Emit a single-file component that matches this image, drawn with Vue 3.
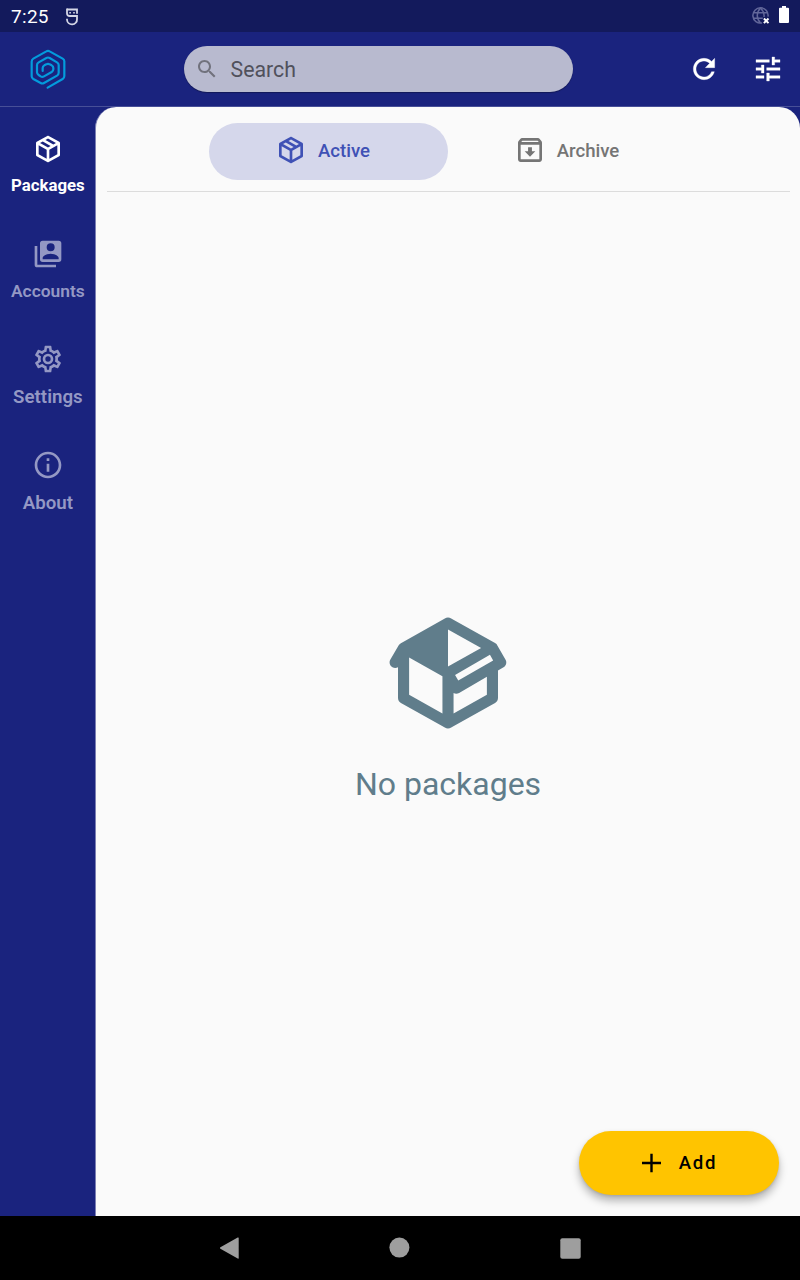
<script setup>
const box = 'M21,16.5C21,16.88 20.79,17.21 20.47,17.38L12.57,21.82C12.41,21.94 12.21,22 12,22C11.79,22 11.59,21.94 11.43,21.82L3.53,17.38C3.21,17.21 3,16.88 3,16.5V7.5C3,7.12 3.21,6.79 3.53,6.62L11.43,2.18C11.59,2.06 11.79,2 12,2C12.21,2 12.41,2.06 12.57,2.18L20.47,6.62C20.79,6.79 21,7.12 21,7.5V16.5M12,4.15L10.11,5.22L16,8.61L17.96,7.5L12,4.15M6.04,7.5L12,10.85L13.96,9.75L8.08,6.35L6.04,7.5M5,15.91L11,19.29V12.58L5,9.21V15.91M19,15.91V9.21L13,12.58V19.29L19,15.91Z'
const openBox = 'M2,10.96C1.5,10.68 1.35,10.07 1.63,9.59L3.13,7C3.24,6.8 3.41,6.66 3.6,6.58L11.43,2.18C11.59,2.06 11.79,2 12,2C12.21,2 12.41,2.06 12.57,2.18L20.47,6.62C20.66,6.72 20.82,6.88 20.91,7.08L22.36,9.6C22.64,10.08 22.47,10.69 22,10.96L21,11.54V16.5C21,16.88 20.79,17.21 20.47,17.38L12.57,21.82C12.41,21.94 12.21,22 12,22C11.79,22 11.59,21.94 11.43,21.82L3.53,17.38C3.21,17.21 3,16.88 3,16.5V10.96C2.7,11.13 2.32,11.14 2,10.96M12,4.15V4.15L12,10.85V10.85L17.96,7.5L12,4.15M5,15.91L11,19.29V12.58L5,9.21V15.91M19,15.91V12.69L14,15.59C13.67,15.77 13.3,15.76 13,15.6V19.29L19,15.91M13.85,13.36L20.13,9.73L19.55,8.72L13.27,12.35L13.85,13.36Z'
const archive = 'M20.54 5.23l-1.39-1.68C18.88 3.21 18.47 3 18 3H6c-.47 0-.88.21-1.16.55L3.46 5.23C3.17 5.57 3 6.02 3 6.5V19c0 1.1.9 2 2 2h14c1.1 0 2-.9 2-2V6.5c0-.48-.17-.93-.46-1.27zM6.24 5h11.52l.83 1H5.42l.82-1zM5 19V8h14v11H5zM13.45 10h-2.9v3H8l4 4 4-4h-2.55z'
const menu = [
  { label: 'Packages', cls: 'packages', icon: box },
  { label: 'Accounts', cls: 'accounts', icon: 'M4,6H2V20A2,2 0 0,0 4,22H18V20H4V6M20,2A2,2 0 0,1 22,4V16A2,2 0 0,1 20,18H8A2,2 0 0,1 6,16V4A2,2 0 0,1 8,2H20M17,7A3,3 0 0,0 14,4A3,3 0 0,0 11,7A3,3 0 0,0 14,10A3,3 0 0,0 17,7M8,15V16H20V15C20,13 16,11.9 14,11.9C12,11.9 8,13 8,15Z' },
  { label: 'Settings', cls: 'settings', icon: 'M12,8A4,4 0 0,1 16,12A4,4 0 0,1 12,16A4,4 0 0,1 8,12A4,4 0 0,1 12,8M12,10A2,2 0 0,0 10,12A2,2 0 0,0 12,14A2,2 0 0,0 14,12A2,2 0 0,0 12,10M10,22C9.75,22 9.54,21.82 9.5,21.58L9.13,18.93C8.5,18.68 7.96,18.34 7.44,17.94L4.95,18.95C4.73,19.03 4.46,18.95 4.34,18.73L2.34,15.27C2.21,15.05 2.27,14.78 2.46,14.63L4.57,12.97L4.5,12L4.57,11L2.46,9.37C2.27,9.22 2.21,8.95 2.34,8.73L4.34,5.27C4.46,5.05 4.73,4.96 4.95,5.05L7.44,6.05C7.96,5.66 8.5,5.32 9.13,5.07L9.5,2.42C9.54,2.18 9.75,2 10,2H14C14.25,2 14.46,2.18 14.5,2.42L14.87,5.07C15.5,5.32 16.04,5.66 16.56,6.05L19.05,5.05C19.27,4.96 19.54,5.05 19.66,5.27L21.66,8.73C21.79,8.95 21.73,9.22 21.54,9.37L19.43,11L19.5,12L19.43,13L21.54,14.63C21.73,14.78 21.79,15.05 21.66,15.27L19.66,18.73C19.54,18.95 19.27,19.04 19.05,18.95L16.56,17.95C16.04,18.34 15.5,18.68 14.87,18.93L14.5,21.58C14.46,21.82 14.25,22 14,22H10M11.25,4L10.88,6.61C9.68,6.86 8.62,7.5 7.85,8.39L5.44,7.35L4.69,8.65L6.8,10.2C6.4,11.37 6.4,12.64 6.8,13.8L4.68,15.36L5.43,16.66L7.86,15.62C8.63,16.5 9.68,17.14 10.87,17.38L11.24,20H12.76L13.13,17.39C14.32,17.14 15.37,16.5 16.14,15.62L18.57,16.66L19.32,15.36L17.2,13.81C17.6,12.64 17.6,11.37 17.2,10.2L19.31,8.65L18.56,7.35L16.15,8.39C15.38,7.5 14.32,6.86 13.12,6.62L12.75,4H11.25Z' },
  { label: 'About', cls: 'about', icon: 'M11 7h2v2h-2zm0 4h2v6h-2zm1-9C6.48 2 2 6.48 2 12s4.48 10 10 10 10-4.48 10-10S17.52 2 12 2zm0 18c-4.41 0-8-3.59-8-8s3.59-8 8-8 8 3.59 8 8-3.59 8-8 8z' },
]
</script>

<template>
  <div class="screen">
    <div class="status">
      <span class="clock">7:25</span>
      <svg class="debug" width="14" height="18" viewBox="0 0 14 18" fill="none" stroke="#d4d6e6" stroke-width="1.8">
        <path d="M2 .6V5.200Q2 8 4.800 8H12V11.200A5 4.900 0 0 1 2 11.800V10.800" />
        <path d="M2 1.500H12M12 .6V5.800" />
        <path d="M4.300 4.800h1.600M8.200 4.800h1.600" stroke-width="1.500" />
      </svg>
      <span class="grow"></span>
      <svg class="net" width="18" height="18" viewBox="0 0 18 18" fill="none">
        <g stroke="#62679a" stroke-width="1.500">
          <path d="M10 15.900A7.600 7.600 0 1 1 16 9.600" />
          <path d="M10.800 11.200H1.800M1.800 5.800H15.200M8.500 1C4.200 5.500 4.200 11.500 8.500 16M8.500 1C11.400 3.800 12.500 6.800 12 10" />
        </g>
        <path d="M11.900 11.500l4.600 4.600M16.500 11.500L11.900 16.100" stroke="#fff" stroke-width="2" />
      </svg>
      <svg class="battery" width="10" height="17" viewBox="0 0 10 17"><path fill="#fff" d="M3 0h4v1.700h2q1 0 1 1V16q0 1-1 1H1q-1 0-1-1V2.700q0-1 1-1h2z" /></svg>
    </div>
    <header class="bar">
      <div class="brand">
        <svg width="36" height="40" viewBox="90 148 108 120" fill="none" stroke="#039bdc" stroke-width="6.600" stroke-linecap="round" stroke-linejoin="round">
          <path d="M143 264L188 238Q193 235 193 229V185Q193 180 188 177L149 155Q144 152 139 155L100 177Q95 180 95 186V230Q95 235 100 238L122 250Q127 253 132 250L171 228Q176 225 176 219V196Q176 191 171 188L149 175Q144 172 139 175L116 188Q111 191 111 196V218Q111 223 116 226L122 230Q127 233 132 230L155 217Q160 214 160 209V205Q160 200 155 197L149 194Q144 191 139 194L133 197Q128 200 128 205V214" />
        </svg>
      </div>
      <div class="search">
        <svg width="24" height="24" viewBox="0 0 24 24"><path fill="#71727d" d="M15.500 14h-.79l-.28-.27C15.410 12.590 16 11.110 16 9.500 16 5.910 13.090 3 9.500 3S3 5.910 3 9.500 5.910 16 9.500 16c1.610 0 3.090-.59 4.230-1.570l.27.28v.79l5 4.990L20.490 19l-4.990-5zm-6 0C7.010 14 5 11.990 5 9.500S7.010 5 9.500 5 14 7.010 14 9.500 11.990 14 9.500 14z" /></svg>
        <span>Search</span>
      </div>
      <div class="tools">
        <svg class="icon bold" viewBox="0 0 24 24"><path d="M17.650 6.350C16.200 4.900 14.210 4 12 4c-4.420 0-7.990 3.580-7.990 8s3.570 8 7.990 8c3.730 0 6.840-2.550 7.730-6h-2.080c-.82 2.330-3.040 4-5.650 4-3.310 0-6-2.690-6-6s2.690-6 6-6c1.660 0 3.140.69 4.220 1.780L13 11h7V4l-2.350 2.350z" /></svg>
        <svg class="icon bold" viewBox="0 0 24 24"><path d="M3 17v2h6v-2H3zM3 5v2h10V5H3zm10 16v-2h8v-2h-8v-2h-2v6h2zM7 9v2H3v2h4v2h2V9H7zm14 4v-2H11v2h10zm-6-4h2V7h4V5h-4V3h-2v6z" /></svg>
      </div>
    </header>
    <div class="body">
      <nav class="side">
        <div v-for="m in menu" :key="m.label" class="item" :class="m.cls">
          <svg class="icon" viewBox="0 0 24 24"><path :d="m.icon" /></svg>
          <span>{{ m.label }}</span>
        </div>
      </nav>
      <main class="content">
        <div class="tabs">
          <div class="tab active">
            <svg class="icon" viewBox="0 0 24 24"><path :d="box" /></svg><span>Active</span>
          </div>
          <div class="tab archive">
            <svg class="icon" viewBox="0 0 24 24"><path :d="archive" /></svg><span>Archive</span>
          </div>
        </div>
        <div class="empty">
          <svg viewBox="-.06 -.06 24.120 24.120"><path :d="openBox" /></svg>
          <p>No packages</p>
        </div>
        <button class="add">
          <svg width="20" height="20" viewBox="0 0 20 20"><path d="M10.500 .7V19.300M1 10H20" stroke="#000" stroke-width="2.400" /></svg>
          <span>Add</span>
        </button>
      </main>
    </div>
    <div class="navbar">
      <svg width="20" height="22" viewBox="0 0 20 22"><path fill="#9e9e9e" d="M17.700 .6Q18.700 0 18.700 1V21Q18.700 22 17.700 21.400L.4 11.700Q-.6 11 .4 10.300z" /></svg>
      <svg width="22" height="22" viewBox="0 0 22 22"><circle cx="11.400" cy="10.600" r="10" fill="#9e9e9e" /></svg>
      <svg width="21" height="21" viewBox="0 0 21 21"><rect x=".3" y=".3" width="20.400" height="20.400" rx="2" fill="#9e9e9e" /></svg>
    </div>
  </div>
</template>

<style>
body { margin: 0; background: #1a237e; }
</style>

<style scoped>
.screen { width: 800px; height: 1280px; display: flex; flex-direction: column; overflow: hidden; background: #1a237e; font-family: Roboto, "Liberation Sans", sans-serif; }
svg { display: block; flex: none; }
.icon { width: 32px; height: 32px; fill: currentColor; }
.bold { stroke: currentColor; stroke-width: .25; }
.status { height: 32px; flex: none; box-sizing: border-box; display: flex; align-items: center; background: #131a5c; padding: 0 11px; color: #fff; }
.clock { font-size: 19px; line-height: 32px; letter-spacing: .3px; width: 54px; padding-top: 2px; }
.debug { margin-top: 1px; }
.grow { flex: 1; }
.net { margin-right: 9px; margin-bottom: 1px; }
.battery { margin-bottom: 3px; }
.bar { height: 75px; flex: none; box-sizing: border-box; border-bottom: 1px solid #474f97; display: flex; align-items: center; }
.brand { width: 96px; padding-right: 88px; box-sizing: content-box; }
.brand svg { margin: 0 0 0 30px; }
.search { width: 389.400px; height: 46px; border-radius: 23px; background: #b8bacf; display: flex; align-items: center; box-sizing: border-box; padding-left: 11px; box-shadow: 0 1px 1px rgba(0, 0, 0, .3); }
.search span { margin-left: 11.500px; padding-top: 2px; font-size: 21.300px; line-height: 44px; color: #50515c; }
.tools { display: flex; gap: 32px; color: #fff; margin-left: 114.600px; }
.body { flex: 1; display: flex; min-height: 0; }
.side { width: 95px; flex: none; padding-top: 25.500px; }
.item { height: 105.500px; display: flex; flex-direction: column; align-items: center; color: #9498c4; font-weight: 600; font-size: 18.700px; }
.item span { line-height: 22px; margin: 10.500px 0 0 .8px; white-space: nowrap; }
.item.packages { color: #fff; font-weight: 700; font-size: 16.800px; }
.item.accounts { font-size: 17.400px; }
.packages span, .accounts span { margin-top: 9.500px; }
.settings .icon { margin-top: -1px; }
.settings span { margin-top: 11.500px; }
.content { flex: 1; position: relative; background: #fafafa; border-left: 1px solid #7c80b4; border-radius: 21px 21px 0 0; display: flex; flex-direction: column; }
.tabs { margin: 0 10px 0 11px; padding: 16px 0 11px 102px; border-bottom: 1px solid #dcdcdc; display: flex; }
.tab { width: 239px; height: 57px; border-radius: 29px; display: flex; align-items: center; justify-content: center; gap: 11px; font-size: 18.600px; font-weight: 500; color: #757575; box-sizing: border-box; }
.tab .icon { margin-bottom: 3px; }
.tab span { line-height: 22px; margin-bottom: 2px; }
.active { background: #d5d7eb; color: #3f51b5; padding-right: 12px; }
.archive { padding-right: 2px; }
.empty { flex: 1; display: flex; flex-direction: column; align-items: center; padding-top: 414px; color: #607d8b; }
.empty svg { width: 134px; height: 134px; fill: #607d8b; }
.empty p { margin: 25px 0 0; font-size: 32px; line-height: 38px; }
.add { position: absolute; right: 21px; bottom: 21px; width: 200px; height: 64px; border: 0; border-radius: 32px; background: #ffc400; box-shadow: 0 6px 9px rgba(0, 0, 0, .28), 0 1px 3px rgba(0, 0, 0, .12); display: flex; align-items: center; justify-content: center; gap: 18px; font-family: inherit; font-size: 18.600px; font-weight: 500; letter-spacing: 1.660px; color: #000; }
.navbar { height: 64px; flex: none; background: #000; display: flex; align-items: center; padding-left: 220px; }
.navbar svg:nth-child(1) { margin-right: 148px; }
.navbar svg:nth-child(2) { margin-right: 150px; margin-bottom: 1px; }
</style>
